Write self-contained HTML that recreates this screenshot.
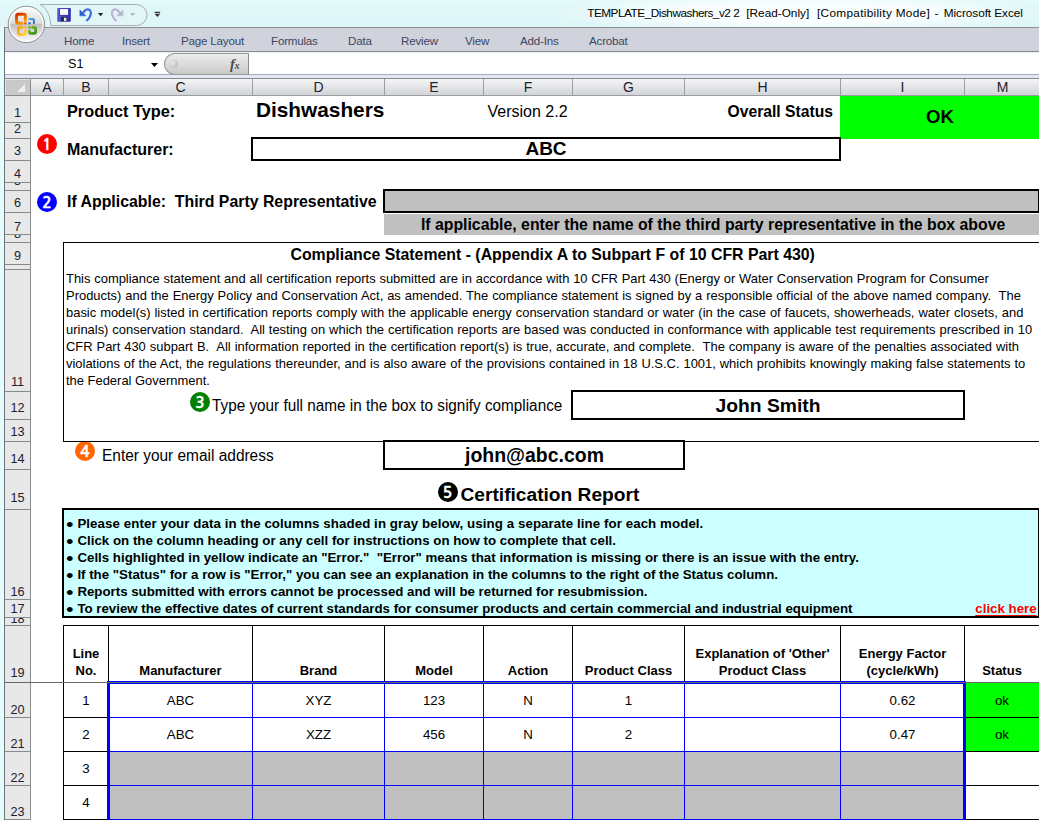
<!DOCTYPE html>
<html>
<head>
<meta charset="utf-8">
<title>TEMPLATE_Dishwashers_v2 2 - Microsoft Excel</title>
<style>
*{box-sizing:border-box;margin:0;padding:0}
html,body{width:1039px;height:820px;overflow:hidden}
body{position:relative;background:#e6fdfe;font-family:"Liberation Sans",Arial,sans-serif;color:#000}
.a{position:absolute;white-space:nowrap}
#title{left:0;top:0;width:1039px;height:27px;background:linear-gradient(#e6fafa,#dff7f8 40%,#dff6f8)}
#glow{left:560px;top:0;width:479px;height:27px;background:radial-gradient(ellipse 52% 70% at 50% 50%,rgba(255,255,255,.9) 0,rgba(255,255,255,.75) 55%,rgba(255,255,255,0) 100%)}
#ttext{left:587px;top:6px;font-size:11.8px;letter-spacing:-0.03px;line-height:15px;color:#000}
#tabs{left:5px;top:27px;width:1034px;height:24px;background:#d0d3dc;border-top:1px solid #8d9097}
.tab{top:34px;font-size:11.6px;letter-spacing:-0.2px;line-height:14px;color:#3b4763}
#fbar{left:5px;top:52px;width:1034px;height:27px;background:#fff}
#sheet{left:5px;top:79px;width:1034px;height:741px;background:#fff}
.corner{left:5px;top:79px;width:26px;height:17px;background:#c9c9c9;border-right:1px solid #8a8a8a;border-bottom:1px solid #8a8a8a;box-shadow:inset 1px 1px 0 #e4e4e4}
.corner:after{content:"";position:absolute;left:12px;top:5px;border-style:solid;border-width:0 0 8px 8px;border-color:transparent transparent #f1f1f1 transparent}
.ch{top:79px;height:17px;background:linear-gradient(#f5f5f6,#e5e6e8 45%,#d3d4d7);border-right:1px solid #9a9da3;border-bottom:1px solid #9a9da3;font-size:14px;line-height:16.6px;text-align:center;color:#1c2030}
.rh{left:5px;width:26px;background:#e8e8e8;border-right:1px solid #8a8e8e;border-bottom:1px solid #868a8a;font-size:12.7px;text-align:center;color:#1c2030;overflow:hidden}
.rh span{position:absolute;left:0;right:0;bottom:1.6px;line-height:16px}
.b{font-weight:bold}
.box{border:2px solid #000;background:#fff}
.circ{width:20px;height:20px;border-radius:50%;color:#fff;font-family:"NanumGothic","Liberation Sans",sans-serif;font-weight:bold;font-size:15.5px;-webkit-text-stroke:.35px #fff;line-height:21px;text-align:center}
.para{font-size:12.95px;line-height:17px;white-space:nowrap}
.j{white-space:normal;text-align:justify;text-align-last:justify;height:17px;overflow:hidden}
.bul{font-weight:bold;font-size:13.3px;line-height:17px}
.dot{font-size:21.5px;line-height:20px;width:9px;text-align:center;transform:scaleY(.86)}
.th{font-weight:bold;font-size:13px;line-height:17px;text-align:center}
.td{font-size:13.3px;text-align:center}

</style>
</head>
<body>
<div class="a" id="title"></div>
<div class="a" id="glow"></div>
<div class="a" id="ttext"><span class="a" style="left:0.2px;top:0;letter-spacing:-0.490px">TEMPLATE_Dishwashers_v2 2</span><span class="a" style="left:159.3px;top:0;letter-spacing:-0.005px">[Read-Only]</span><span class="a" style="left:230.0px;top:0;letter-spacing:0.306px">[Compatibility Mode]</span><span class="a" style="left:347.5px;top:0;letter-spacing:0.562px">-</span><span class="a" style="left:356.8px;top:0;letter-spacing:-0.066px">Microsoft Excel</span></div>
<div class="a" id="tabs"></div>
<div class="a tab" style="left:64px">Home</div>
<div class="a tab" style="left:122px">Insert</div>
<div class="a tab" style="left:181px">Page Layout</div>
<div class="a tab" style="left:271px">Formulas</div>
<div class="a tab" style="left:348px">Data</div>
<div class="a tab" style="left:401px">Review</div>
<div class="a tab" style="left:465px">View</div>
<div class="a tab" style="left:520px">Add-Ins</div>
<div class="a tab" style="left:589px">Acrobat</div>
<div class="a" id="fbar"></div>
<div class="a" id="sheet"></div>
<!-- QAT + office button -->
<svg class="a" style="left:0;top:0" width="200" height="56" viewBox="0 0 200 56">
 <defs>
  <linearGradient id="ob2" x1="0" y1="0" x2="0" y2="1"><stop offset="0" stop-color="#fdfdfd"/><stop offset="0.47" stop-color="#dcdcdc"/><stop offset="0.5" stop-color="#c2c2c2"/><stop offset="0.8" stop-color="#e6e6e6"/><stop offset="1" stop-color="#fafafa"/></linearGradient>
  <linearGradient id="gr" x1="0" y1="0" x2="0.6" y2="1"><stop offset="0" stop-color="#cf2a00"/><stop offset="1" stop-color="#ff9a00"/></linearGradient>
  <linearGradient id="gy" x1="0" y1="0" x2="1" y2="1"><stop offset="0" stop-color="#ff9c00"/><stop offset="1" stop-color="#ffd24a"/></linearGradient>
  <linearGradient id="gg" x1="0" y1="0" x2="1" y2="1"><stop offset="0" stop-color="#7ab82a"/><stop offset="1" stop-color="#3f8f1c"/></linearGradient>
  <linearGradient id="gb" x1="0" y1="0" x2="1" y2="1"><stop offset="0" stop-color="#4aa8f0"/><stop offset="1" stop-color="#1f6fd0"/></linearGradient>
  <linearGradient id="sv" x1="0" y1="0" x2="1" y2=".3"><stop offset="0" stop-color="#6464dc"/><stop offset="1" stop-color="#3030a6"/></linearGradient>
 </defs>
 <path d="M40 4.500 H136.500 A10.500 10.500 0 0 1 136.500 25.500 H50.800 C50.500 15.500 46.500 7.500 40 4.500 Z" fill="#e2f5f7" stroke="#a3aeb6" stroke-width="1"/>
 <circle cx="26.400" cy="24.400" r="18.200" fill="url(#ob2)" stroke="#8f8f8f" stroke-width="1"/>
 <circle cx="26.400" cy="24.400" r="16.800" fill="none" stroke="#fff" stroke-width="1.200" opacity=".85"/>
 <!-- office logo -->
 <g fill="none" stroke-linecap="round" stroke-linejoin="round">
  <path d="M25.400 20.500 V16 Q25.400 14.300 23.700 14.300 H18.300 Q16.600 14.300 16.600 16 V21.500 Q16.600 23.200 18.300 23.200 H21.800" stroke="url(#gr)" stroke-width="2.900"/>
  <path d="M29.300 19 H32.600 Q33.900 19 33.900 20.300 V23.300" stroke="url(#gb)" stroke-width="1.900"/>
  <path d="M22.300 27.500 H19.700 Q18.300 27.500 18.300 28.900 V33.300 Q18.300 34.700 19.700 34.700 H24.100 Q25.500 34.700 25.500 33.300 V31" stroke="url(#gy)" stroke-width="2.700"/>
  <path d="M32.500 27.400 H34.200 Q35.600 27.400 35.600 28.800 V32 Q35.600 33.400 34.200 33.400 H30.800 Q29.400 33.400 29.400 32 V31" stroke="url(#gg)" stroke-width="2.700"/>
 </g>
 <circle cx="25.300" cy="23.300" r="1.300" fill="#f06010"/><circle cx="29.500" cy="23.300" r="1.300" fill="#2a80e0"/>
 <circle cx="25.300" cy="27.600" r="1.300" fill="#ffb830"/><circle cx="29.500" cy="27.600" r="1.300" fill="#70b020"/>
 <!-- save -->
 <rect x="57.200" y="8.100" width="13.600" height="13.600" rx=".8" fill="url(#sv)"/>
 <rect x="59.300" y="8.400" width="9.500" height="7.300" fill="#3a3ab8"/>
 <rect x="60" y="9" width="8.100" height="5.900" fill="#f6f6fc"/>
 <rect x="61.300" y="17.100" width="5.600" height="4.200" fill="#20203a"/>
 <rect x="63.900" y="17.700" width="2.500" height="3.400" fill="#e6e6f2"/>
 <rect x="69.200" y="9.700" width="1" height="1" fill="#20206a"/>
 <!-- undo -->
 <path d="M83.200 12.600 C85 9.500 88.300 8.100 90.200 10.500 C92 13.300 90 17.800 86.900 20.400" fill="none" stroke="#3a6fe0" stroke-width="2.200" stroke-linecap="round"/>
 <path d="M79.900 10 L79.900 15.800 L86 15.800 Z" fill="#2f62d6" stroke="#2f62d6" stroke-width=".6" stroke-linejoin="round"/>
 <path d="M98 12.900 h5.200 l-2.600 3.300z" fill="#222"/>
 <!-- redo disabled -->
 <path d="M119.600 12.600 C117.800 9.500 114.500 8.100 112.600 10.500 C110.800 13.300 112.800 17.800 115.900 20.400" fill="none" stroke="#b7b5d2" stroke-width="2.200" stroke-linecap="round"/>
 <path d="M122.900 10 L122.900 15.800 L116.800 15.800 Z" fill="#b7b5d2" stroke="#b7b5d2" stroke-width=".6" stroke-linejoin="round"/>
 <path d="M130 12.900 h5.200 l-2.600 3.300z" fill="#b4b7bd"/>
 <!-- customize -->
 <rect x="154.700" y="11.800" width="5.400" height="1.200" fill="#333"/>
 <path d="M154.500 13.800 h5.800 l-2.900 3.300z" fill="#333"/>
</svg>
<!-- formula bar -->
<div class="a" style="left:5px;top:51px;width:1034px;height:1px;background:#8a8d93"></div>
<div class="a" style="left:5px;top:52px;width:1034px;height:1px;background:#eceef2"></div>
<div class="a" style="left:5px;top:74px;width:1034px;height:1px;background:#a7abb2"></div>
<div class="a" style="left:5px;top:75px;width:1034px;height:3px;background:#e3e8f2"></div>
<div class="a" style="left:5px;top:78px;width:1034px;height:1px;background:#868b93"></div>
<div class="a" style="left:68px;top:57.3px;font-size:12.6px;line-height:14px">S1</div>
<svg class="a" style="left:150px;top:62px" width="10" height="6"><path d="M1 1 h7 l-3.500 4z" fill="#000"/></svg>
<div class="a" style="left:164px;top:53px;width:85px;height:22px;border:1px solid #9a9a9a;border-right:1px solid #8a8a8a;border-radius:11px 0 0 11px;background:linear-gradient(#ececec,#dcdcdc 50%,#c8c8c8)"></div>
<div class="a" style="left:170px;top:60px;width:8px;height:8px;border-radius:50%;background:radial-gradient(circle at 35% 35%,#e8ecf2,#a8aeba)"></div>
<div class="a" style="left:230px;top:56px;font-family:'Liberation Serif',serif;font-style:italic;font-weight:bold;font-size:14.5px;line-height:16px;color:#4c4c4c">f<span style="font-size:9.5px">x</span></div>
<div class="a" style="left:4px;top:27px;width:1px;height:793px;background:#707478"></div>

<div class="a corner"></div>
<div class="a ch" style="left:31px;width:33px">A</div>
<div class="a ch" style="left:64px;width:45px">B</div>
<div class="a ch" style="left:109px;width:144px">C</div>
<div class="a ch" style="left:253px;width:132px">D</div>
<div class="a ch" style="left:385px;width:99px">E</div>
<div class="a ch" style="left:484px;width:89px">F</div>
<div class="a ch" style="left:573px;width:112px">G</div>
<div class="a ch" style="left:685px;width:156px">H</div>
<div class="a ch" style="left:841px;width:124px">I</div>
<div class="a ch" style="left:965px;width:76px">M</div>
<div class="a rh" style="top:96px;height:27px"><span style="bottom:0.9px">1</span></div>
<div class="a rh" style="top:123px;height:16px"><span style="bottom:0.8px">2</span></div>
<div class="a rh" style="top:139px;height:22px"><span style="bottom:0.9px">3</span></div>
<div class="a rh" style="top:161px;height:22px"><span style="bottom:-0.1px">4</span></div>
<div class="a rh" style="top:183px;height:8px"><span style="bottom:1.0px">5</span></div>
<div class="a rh" style="top:191px;height:22px"><span style="bottom:0.9px">6</span></div>
<div class="a rh" style="top:213px;height:22px"><span style="bottom:-0.5px">7</span></div>
<div class="a rh" style="top:235px;height:8px"><span style="bottom:-0.4px">8</span></div>
<div class="a rh" style="top:243px;height:22px"><span style="bottom:-0.4px">9</span></div>
<div class="a rh" style="top:265px;height:5px"><span style="bottom:0.5px"></span></div>
<div class="a rh" style="top:270px;height:122px"><span style="bottom:1.3px">11</span></div>
<div class="a rh" style="top:392px;height:28px"><span style="bottom:2.7px">12</span></div>
<div class="a rh" style="top:420px;height:22px"><span style="bottom:0.9px">13</span></div>
<div class="a rh" style="top:442px;height:28px"><span style="bottom:2.5px">14</span></div>
<div class="a rh" style="top:470px;height:40px"><span style="bottom:3.5px">15</span></div>
<div class="a rh" style="top:510px;height:90px"><span style="bottom:-1.4px">16</span></div>
<div class="a rh" style="top:600px;height:18px"><span style="bottom:-0.2px">17</span></div>
<div class="a rh" style="top:618px;height:8px"><span style="bottom:-1.5px">18</span></div>
<div class="a rh" style="top:626px;height:57px"><span style="bottom:1.2px">19</span></div>
<div class="a rh" style="top:683px;height:35px"><span style="bottom:-1.4px">20</span></div>
<div class="a rh" style="top:718px;height:34px"><span style="bottom:-1.2px">21</span></div>
<div class="a rh" style="top:752px;height:34px"><span style="bottom:-1.4px">22</span></div>
<div class="a rh" style="top:786px;height:34px"><span style="bottom:-1.2px">23</span></div>
<!-- Row 1 -->
<div class="a b" style="left:67px;top:102px;font-size:16.3px;line-height:18px">Product Type:</div>
<div class="a b" style="left:256px;top:98px;font-size:20.8px;line-height:24px">Dishwashers</div>
<div class="a" style="left:483px;width:89px;text-align:center;top:103px;font-size:16px;line-height:18px">Version 2.2</div>
<div class="a b" style="left:684px;width:149px;text-align:right;top:102.6px;font-size:15.7px;line-height:18px">Overall Status</div>
<div class="a" style="left:840px;top:96px;width:199px;height:43px;background:#00ff00"></div>
<div class="a b" style="left:841px;width:198px;text-align:center;top:106px;font-size:18.6px;line-height:22px">OK</div>
<!-- Row 3 -->
<div class="a circ" style="left:37px;top:134px;background:#ff0000">1</div>
<div class="a b" style="left:67px;top:141px;font-size:16px;line-height:18px">Manufacturer:</div>
<div class="a box" style="left:251px;top:137px;width:590px;height:24px"></div>
<div class="a b" style="left:251px;width:590px;text-align:center;top:138px;font-size:19px;line-height:22px">ABC</div>
<!-- Row 6-7 -->
<div class="a circ" style="left:37px;top:192px;background:#0000ff">2</div>
<div class="a b" style="left:67px;top:193px;font-size:15.86px;line-height:18px">If Applicable:&nbsp; Third Party Representative</div>
<div class="a" style="left:384px;top:214px;width:655px;height:21px;background:#c0c0c0"></div>
<div class="a box" style="left:383px;top:189px;width:657px;height:24px;background:#c0c0c0"></div>
<div class="a b" style="left:385.6px;width:655px;text-align:center;top:215.8px;font-size:15.82px;line-height:18px">If applicable, enter the name of the third party representative in the box above</div>
<!-- Compliance -->
<div class="a" style="left:63px;top:242px;width:990px;height:200px;border:1px solid #000;z-index:3"></div>
<div class="a b" style="left:65.2px;width:975px;text-align:center;top:245.7px;font-size:15.85px;line-height:18px">Compliance Statement - (Appendix A to Subpart F of 10 CFR Part 430)</div>
<div class="a para j" style="left:66px;top:269.50px;width:922.8px">This compliance statement and all certification reports submitted are in accordance with 10 CFR Part 430 (Energy or Water Conservation Program for Consumer</div>
<div class="a para j" style="left:66px;top:286.55px;width:954.9px">Products) and the Energy Policy and Conservation Act, as amended. The compliance statement is signed by a responsible official of the above named company.&nbsp; The</div>
<div class="a para j" style="left:66px;top:303.60px;width:957.4px">basic model(s) listed in certification reports comply with the applicable energy conservation standard or water (in the case of faucets, showerheads, water closets, and</div>
<div class="a para j" style="left:66px;top:320.65px;width:966.1px">urinals) conservation standard.&nbsp; All testing on which the certification reports are based was conducted in conformance with applicable test requirements prescribed in 10</div>
<div class="a para j" style="left:66px;top:337.70px;width:953px">CFR Part 430 subpart B.&nbsp; All information reported in the certification report(s) is true, accurate, and complete.&nbsp; The company is aware of the penalties associated with</div>
<div class="a para j" style="left:66px;top:354.75px;width:959.3px">violations of the Act, the regulations thereunder, and is also aware of the provisions contained in 18 U.S.C. 1001, which prohibits knowingly making false statements to</div>
<div class="a para" style="left:66px;top:371.80px">the Federal Government.</div>
<div class="a circ" style="left:190px;top:391.6px;background:#008000">3</div>
<div class="a" style="left:212px;top:397px;font-size:16px;line-height:18px;transform:scaleX(.956);transform-origin:0 0">Type your full name in the box to signify compliance</div>
<div class="a box" style="left:571px;top:390px;width:394px;height:30px"></div>
<div class="a b" style="left:571px;width:394px;text-align:center;top:394.6px;font-size:18.3px;line-height:22px;transform:scaleX(1.055)">John Smith</div>
<!-- Email -->
<div class="a circ" style="left:75px;top:441.3px;background:#ff6600">4</div>
<div class="a" style="left:101.6px;top:447px;font-size:16px;line-height:18px;transform:scaleX(.965);transform-origin:0 0">Enter your email address</div>
<div class="a box" style="left:383px;top:440px;width:302px;height:30px"></div>
<div class="a b" style="left:383px;width:303px;text-align:center;top:444px;font-size:19.45px;line-height:22px">john@abc.com</div>
<!-- Cert Report -->
<div class="a circ" style="left:437.5px;top:481.8px;background:#000">5</div>
<div class="a b" style="left:460.5px;top:483.5px;font-size:19.16px;line-height:22px">Certification Report</div>
<div class="a" style="left:62px;top:508px;width:978px;height:110px;background:#ccffff;border:2px solid #000"></div>
<div class="a dot" style="left:65.2px;top:515.00px">•</div><div class="a bul" style="left:77.4px;top:515.20px;letter-spacing:0.075px">Please enter your data in the columns shaded in gray below, using a separate line for each model.</div>
<div class="a dot" style="left:65.2px;top:531.90px">•</div><div class="a bul" style="left:77.4px;top:532.10px;letter-spacing:0.009px">Click on the column heading or any cell for instructions on how to complete that cell.</div>
<div class="a dot" style="left:65.2px;top:548.80px">•</div><div class="a bul" style="left:77.4px;top:549.00px;letter-spacing:0.000px">Cells highlighted in yellow indicate an "Error."&nbsp; "Error" means that information is missing or there is an issue with the entry.</div>
<div class="a dot" style="left:65.2px;top:565.70px">•</div><div class="a bul" style="left:77.4px;top:565.90px;letter-spacing:-0.006px">If the "Status" for a row is "Error," you can see an explanation in the columns to the right of the Status column.</div>
<div class="a dot" style="left:65.2px;top:582.60px">•</div><div class="a bul" style="left:77.4px;top:582.80px;letter-spacing:-0.012px">Reports submitted with errors cannot be processed and will be returned for resubmission.</div>
<div class="a dot" style="left:65.2px;top:599.50px">•</div><div class="a bul" style="left:77.4px;top:599.70px;letter-spacing:-0.010px">To review the effective dates of current standards for consumer products and certain commercial and industrial equipment</div>
<div class="a b" style="left:975.3px;top:600.5px;font-size:13.3px;line-height:16px;color:#ff0000;text-decoration:underline;text-underline-offset:1.5px">click here</div>
<div class="a" style="left:110px;top:752px;width:853px;height:68px;background:#c0c0c0"></div>
<div class="a" style="left:966px;top:683px;width:73px;height:68px;background:#00ff00"></div>
<div class="a" style="left:63px;top:625px;width:976px;height:1px;background:#000"></div>
<div class="a" style="left:63px;top:682px;width:46px;height:1px;background:#000"></div>
<div class="a" style="left:964px;top:682px;width:75px;height:1px;background:#000"></div>
<div class="a" style="left:63px;top:717px;width:46px;height:1px;background:#000"></div>
<div class="a" style="left:964px;top:717px;width:75px;height:1px;background:#000"></div>
<div class="a" style="left:63px;top:751px;width:46px;height:1px;background:#000"></div>
<div class="a" style="left:964px;top:751px;width:75px;height:1px;background:#000"></div>
<div class="a" style="left:63px;top:785px;width:46px;height:1px;background:#000"></div>
<div class="a" style="left:964px;top:785px;width:75px;height:1px;background:#000"></div>
<div class="a" style="left:63px;top:819px;width:46px;height:1px;background:#000"></div>
<div class="a" style="left:964px;top:819px;width:75px;height:1px;background:#000"></div>
<div class="a" style="left:63px;top:625px;width:1px;height:58px;background:#000"></div>
<div class="a" style="left:108px;top:625px;width:1px;height:58px;background:#000"></div>
<div class="a" style="left:252px;top:625px;width:1px;height:58px;background:#000"></div>
<div class="a" style="left:384px;top:625px;width:1px;height:58px;background:#000"></div>
<div class="a" style="left:483px;top:625px;width:1px;height:58px;background:#000"></div>
<div class="a" style="left:572px;top:625px;width:1px;height:58px;background:#000"></div>
<div class="a" style="left:684px;top:625px;width:1px;height:58px;background:#000"></div>
<div class="a" style="left:840px;top:625px;width:1px;height:58px;background:#000"></div>
<div class="a" style="left:964px;top:625px;width:1px;height:58px;background:#000"></div>
<div class="a" style="left:63px;top:625px;width:1px;height:195px;background:#000"></div>
<div class="a" style="left:252px;top:683px;width:1px;height:137px;background:#0000ff"></div>
<div class="a" style="left:384px;top:683px;width:1px;height:137px;background:#0000ff"></div>
<div class="a" style="left:483px;top:683px;width:1px;height:137px;background:#0000ff"></div>
<div class="a" style="left:572px;top:683px;width:1px;height:137px;background:#0000ff"></div>
<div class="a" style="left:684px;top:683px;width:1px;height:137px;background:#0000ff"></div>
<div class="a" style="left:840px;top:683px;width:1px;height:137px;background:#0000ff"></div>
<div class="a" style="left:108px;top:717px;width:857px;height:1px;background:#0000ff"></div>
<div class="a" style="left:108px;top:751px;width:857px;height:1px;background:#0000ff"></div>
<div class="a" style="left:108px;top:785px;width:857px;height:1px;background:#0000ff"></div>
<div class="a" style="left:108px;top:819px;width:857px;height:1px;background:#0000ff"></div>
<div class="a" style="left:107px;top:681px;width:859px;height:3px;background:#0000ff"></div>
<div class="a" style="left:107px;top:681px;width:3px;height:139px;background:#0000ff"></div>
<div class="a" style="left:963px;top:681px;width:3px;height:139px;background:#0000ff"></div>
<div class="a" style="left:5px;top:682px;width:1034px;height:1px;background:#686868"></div>
<div class="a th" style="left:64px;width:44px;bottom:141.29999999999995px">Line<br>No.</div>
<div class="a th" style="left:109px;width:143px;bottom:141.29999999999995px">Manufacturer</div>
<div class="a th" style="left:253px;width:131px;bottom:141.29999999999995px">Brand</div>
<div class="a th" style="left:385px;width:98px;bottom:141.29999999999995px">Model</div>
<div class="a th" style="left:484px;width:88px;bottom:141.29999999999995px">Action</div>
<div class="a th" style="left:573px;width:111px;bottom:141.29999999999995px">Product Class</div>
<div class="a th" style="left:685px;width:155px;bottom:141.29999999999995px">Explanation of 'Other'<br>Product Class</div>
<div class="a th" style="left:841px;width:123px;bottom:141.29999999999995px">Energy Factor<br>(cycle/kWh)</div>
<div class="a th" style="left:965px;width:74px;bottom:141.29999999999995px">Status</div>
<div class="a td" style="left:64px;width:44px;top:683.6px;height:34px;line-height:34px">1</div>
<div class="a td" style="left:109px;width:143px;top:683.6px;height:34px;line-height:34px">ABC</div>
<div class="a td" style="left:253px;width:131px;top:683.6px;height:34px;line-height:34px">XYZ</div>
<div class="a td" style="left:385px;width:98px;top:683.6px;height:34px;line-height:34px">123</div>
<div class="a td" style="left:484px;width:88px;top:683.6px;height:34px;line-height:34px">N</div>
<div class="a td" style="left:573px;width:111px;top:683.6px;height:34px;line-height:34px">1</div>
<div class="a td" style="left:841px;width:123px;top:683.6px;height:34px;line-height:34px">0.62</div>
<div class="a td" style="left:965px;width:74px;top:683.6px;height:34px;line-height:34px">ok</div>
<div class="a td" style="left:64px;width:44px;top:718px;height:33px;line-height:33px">2</div>
<div class="a td" style="left:109px;width:143px;top:718px;height:33px;line-height:33px">ABC</div>
<div class="a td" style="left:253px;width:131px;top:718px;height:33px;line-height:33px">XZZ</div>
<div class="a td" style="left:385px;width:98px;top:718px;height:33px;line-height:33px">456</div>
<div class="a td" style="left:484px;width:88px;top:718px;height:33px;line-height:33px">N</div>
<div class="a td" style="left:573px;width:111px;top:718px;height:33px;line-height:33px">2</div>
<div class="a td" style="left:841px;width:123px;top:718px;height:33px;line-height:33px">0.47</div>
<div class="a td" style="left:965px;width:74px;top:718px;height:33px;line-height:33px">ok</div>
<div class="a td" style="left:64px;width:44px;top:752px;height:33px;line-height:33px">3</div>
<div class="a td" style="left:64px;width:44px;top:786px;height:33px;line-height:33px">4</div>

</body>
</html>
